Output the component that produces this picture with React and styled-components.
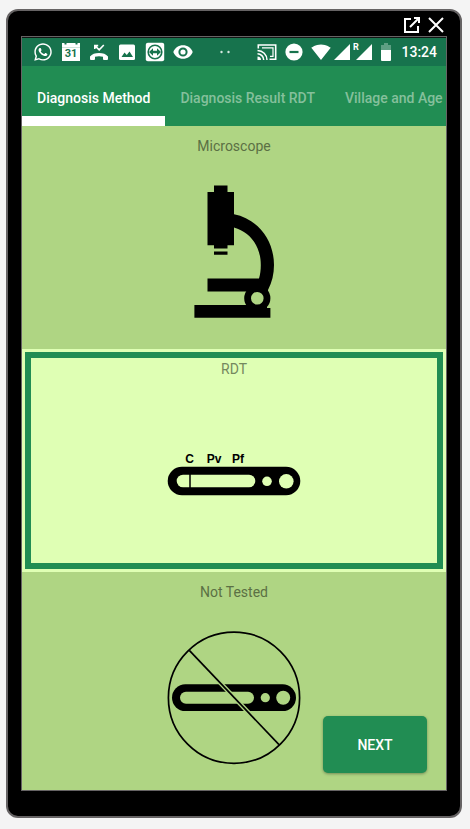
import React, { useState } from 'react';
import styled, { createGlobalStyle } from 'styled-components';
import { FaWhatsapp } from 'react-icons/fa';
import { MdSignalWifi4Bar } from 'react-icons/md';

const GlobalStyle = createGlobalStyle`
  *, *::before, *::after { box-sizing: border-box; }
  body {
    margin: 0;
    background: #f4f4f4;
    font-family: Roboto, "Liberation Sans", sans-serif;
  }
  button { font: inherit; border: 0; margin: 0; padding: 0; cursor: pointer; }
  svg { display: block; flex: none; }
`;

const Device = styled.div`
  margin: 9px 8px 11px 6px;
  padding: 0 13px 25px;
  background: #000;
  border: 2px solid #666364;
  border-radius: 12px;
`;

const WindowBar = styled.header`
  display: flex;
  justify-content: flex-end;
  align-items: center;
  gap: 8px;
  height: 25px;
  padding: 3px 3px 0 0;
`;

const WindowButton = styled.button`
  background: none;
  color: #fff;
`;

const Screen = styled.main`
  position: relative;
  overflow: hidden;
  border: 1px solid #666364;
`;

const StatusBar = styled.div`
  display: flex;
  justify-content: space-between;
  align-items: center;
  height: 29px;
  padding: 0 9px 0 11px;
  border-top: 1px solid #101513;
  background: #17734d;
  color: #fff;
`;

const IconGroup = styled.div`
  display: flex;
  align-items: center;
  gap: ${(p) => p.$gap}px;
`;

const Clock = styled.time`
  margin-left: 2px;
  font-size: 14px;
  line-height: 20px;
  font-weight: 500;
`;

const Tabs = styled.nav`
  display: flex;
  height: 60px;
  overflow: hidden;
  background: #218d53;
`;

const Tab = styled.button`
  flex: none;
  padding: 14px 15px 0;
  background: none;
  border-bottom: 10px solid ${(p) => (p.$active ? '#fff' : 'transparent')};
  color: ${(p) => (p.$active ? '#fff' : '#85c09c')};
  font-size: 14px;
  line-height: 20px;
  font-weight: 500;
  white-space: nowrap;
`;

const Options = styled.div`
  display: flex;
  flex-direction: column;
  height: 664px;
  overflow: hidden;
`;

const Option = styled.button`
  flex: none;
  display: flex;
  flex-direction: column;
  align-items: center;
  height: 223px;
  padding: 3px;
  background: ${(p) => (p.$selected ? '#dfffb4' : '#afd583')};
`;

const OptionBody = styled.span`
  flex: 1;
  align-self: stretch;
  display: flex;
  flex-direction: column;
  align-items: center;
  gap: 29px;
  padding-top: 1px;
  border: 6px solid ${(p) => (p.$selected ? '#218d53' : 'transparent')};
`;

const OptionLabel = styled.span`
  color: ${(p) => (p.$selected ? '#74885e' : '#5b7044')};
  font-size: 14px;
  line-height: 20px;
`;

const NextButton = styled.button`
  position: absolute;
  right: 19px;
  bottom: 17px;
  width: 104px;
  height: 57px;
  border-radius: 5px;
  background: #218d53;
  box-shadow: 0 1px 3px rgba(0, 0, 0, 0.35);
  color: #fff;
  font-size: 14px;
  font-weight: 500;
`;

const PopOutIcon = () => (
  <svg width="16" height="16" viewBox="0 0 16 16" fill="none" stroke="currentColor" strokeWidth="2">
    <path d="M7 2H1v13h13V9" />
    <path d="M6 10l9-9M10 1h5v5" />
  </svg>
);

const CloseIcon = () => (
  <svg width="16" height="16" viewBox="0 0 16 16" fill="none" stroke="currentColor" strokeWidth="2">
    <path d="M1 1l14 14M15 1L1 15" />
  </svg>
);

const CalendarIcon = () => (
  <svg width="20" height="20" viewBox="0 0 20 20">
    <path fill="#fff" d="M1 1h2.500v1.500h2V1h9v1.500h2V1H19v18H1z" />
    <path stroke="#17734d" d="M1 5.500h18" strokeOpacity="0.2" />
    <text x="10" y="15" textAnchor="middle" fontFamily="Roboto, sans-serif" fontSize="11" fontWeight="700" fill="#17734d">31</text>
  </svg>
);

const MissedCallIcon = () => (
  <svg width="20" height="20" viewBox="0 0 20 20">
    <path fill="none" stroke="#fff" strokeWidth="1.600" d="M5.800 7V3.600h3.400M6 3.800l4.200 4L14.800 3" />
    <path fill="#fff" d="M1 17v-2.500C3 12 6 11 10 11s7 1 9 3.500V17q0 1-1 1h-3q-1 0-1-1v-2.300c-2.500-.7-5.500-.7-8 0V17q0 1-1 1H2q-1 0-1-1z" />
  </svg>
);

const PictureIcon = () => (
  <svg width="20" height="20" viewBox="0 0 20 20">
    <rect x="2" y="2.500" width="16" height="15.500" rx="1.500" fill="#fff" />
    <path fill="#17734d" d="M4.500 15l3-4.500 2.300 2.600 2.700-3.600L16 15z" />
  </svg>
);

const RemoteIcon = () => (
  <svg width="20" height="20" viewBox="0 0 20 20">
    <rect x=".8" y=".8" width="18.400" height="18.400" rx="2" fill="#fff" />
    <circle cx="10" cy="10" r="6.800" fill="none" stroke="#17734d" strokeWidth="1.600" />
    <path fill="#17734d" d="M4 10l4-3.700v2.500h4V6.300l4 3.700-4 3.700v-2.500H8v2.500z" />
  </svg>
);

const EyeIcon = () => (
  <svg width="20" height="20" viewBox="0 0 20 20">
    <path fill="#fff" d="M10 3.200c4.500 0 8.100 2.700 9.700 6.800-1.600 4.100-5.200 6.800-9.700 6.800S1.900 14.100.3 10C1.900 5.900 5.500 3.200 10 3.200z" />
    <circle cx="10" cy="10" r="3.600" fill="#fff" stroke="#17734d" strokeWidth="2" />
  </svg>
);

const DotsIcon = () => (
  <svg width="10" height="20" viewBox="0 0 10 20" fill="#d5e8df">
    <circle cx="1.500" cy="10" r="1.200" />
    <circle cx="8.500" cy="10" r="1.200" />
  </svg>
);

const CastIcon = () => (
  <svg width="20" height="20" viewBox="0 0 20 20" fill="none" stroke="#fff">
    <path strokeWidth="1.600" d="M1.300 6.500V3h17.400v14.200H12.500" />
    <path strokeWidth="1.200" d="M5 5.800h11v8.600h-3" />
    <path strokeWidth="1.500" d="M.5 8.500A9.500 9.500 0 0 1 10 18M.5 11.800A6.200 6.200 0 0 1 6.700 18" />
    <path fill="#fff" stroke="none" d="M.5 14.500A3.500 3.500 0 0 1 4 18H.5z" />
  </svg>
);

const DoNotDisturbIcon = () => (
  <svg width="18" height="20" viewBox="0 0 18 20">
    <circle cx="9" cy="10" r="8.600" fill="#fff" />
    <path stroke="#17734d" strokeWidth="2.200" d="M4.500 10h9" />
  </svg>
);

const SignalIcon = () => (
  <svg width="16" height="20" viewBox="0 0 16 20" fill="#fff">
    <path d="M16 2v16H0z" />
  </svg>
);

const RoamingIcon = () => (
  <svg width="20" height="20" viewBox="0 0 20 20">
    <path fill="#fff" d="M19 2v16H3z" />
    <path fill="#17734d" d="M0 0h7.500v10H0z" />
    <text x="0" y="8" fontFamily="Roboto, sans-serif" fontSize="9" fontWeight="700" fill="#fff">R</text>
  </svg>
);

const BatteryIcon = () => (
  <svg width="10" height="20" viewBox="0 0 10 20">
    <path fill="#5d9f83" d="M3 1h4v2h3v6H0V3h3z" />
    <path fill="#fff" d="M0 8h10v10a1 1 0 0 1-1 1H1a1 1 0 0 1-1-1z" />
  </svg>
);

const MicroscopeDrawing = () => (
  <svg width="134" height="134" viewBox="0 0 134 134">
    <path d="M47 .5h13.500V7H67v22.300C91 34 107 55 107 80c0 9-2 17-6 25v4H88l-8-2.500H40.500v-13H92c1.200-4 1.800-8 1.800-13.500 0-19-10.800-33-26.800-37.500v17.800h-6.500v3.200H47v-3.200h-6.500V7H47z" />
    <path d="M47 66.600h13.500v3.200H47zM27.400 120H100v3h3.400v9.700h-76z" />
    <circle cx="90.300" cy="113.300" r="9.700" fill="#afd583" stroke="#000" strokeWidth="6.800" />
  </svg>
);

const RdtDrawing = () => (
  <svg width="134" height="134" viewBox="0 0 134 134">
    <g fontFamily="'Liberation Sans', Arial, sans-serif" fontSize="12" fontWeight="700" textAnchor="middle">
      <text x="22.500" y="55">C</text>
      <text x="47" y="55">Pv</text>
      <text x="71" y="55">Pf</text>
    </g>
    <rect x=".7" y="58.700" width="132.600" height="28.600" rx="14.300" />
    <g fill="#dfffb4">
      <rect x="9.700" y="66.700" width="78.600" height="12.600" rx="6.300" />
      <circle cx="100" cy="73.300" r="4.800" />
      <circle cx="119.300" cy="73.300" r="7.300" />
    </g>
    <path d="M23 66v14" stroke="#000" strokeWidth="1.500" />
  </svg>
);

const NotTestedDrawing = () => (
  <svg width="134" height="134" viewBox="0 0 134 134">
    <rect x="5" y="53.300" width="124" height="26.800" rx="13.400" />
    <g fill="#afd583">
      <rect x="13" y="60.700" width="74" height="12" rx="6" />
      <circle cx="98.300" cy="66.700" r="4.600" />
      <circle cx="116.200" cy="66.700" r="7" />
    </g>
    <path d="M22.300 19.300L112 113.700" stroke="#afd583" strokeWidth="4.400" />
    <path d="M22.300 19.300L112 113.700" stroke="#000" strokeWidth="1.700" />
    <circle cx="67" cy="66.700" r="65.600" fill="none" stroke="#000" strokeWidth="1.700" />
  </svg>
);

const tabs = ['Diagnosis Method', 'Diagnosis Result RDT', 'Village and Age'];

const options = [
  { label: 'Microscope', Drawing: MicroscopeDrawing },
  { label: 'RDT', Drawing: RdtDrawing },
  { label: 'Not Tested', Drawing: NotTestedDrawing },
];

export default function App() {
  const [tab, setTab] = useState(tabs[0]);
  const [choice, setChoice] = useState('RDT');

  return (
    <>
      <GlobalStyle />
      <Device>
        <WindowBar>
          <WindowButton type="button" aria-label="Open in new window"><PopOutIcon /></WindowButton>
          <WindowButton type="button" aria-label="Close"><CloseIcon /></WindowButton>
        </WindowBar>
        <Screen>
          <StatusBar>
            <IconGroup $gap={8}>
              <FaWhatsapp size={20} />
              <CalendarIcon />
              <MissedCallIcon />
              <PictureIcon />
              <RemoteIcon />
              <EyeIcon />
            </IconGroup>
            <DotsIcon />
            <IconGroup $gap={8}>
              <CastIcon />
              <DoNotDisturbIcon />
              <IconGroup $gap={3}>
                <MdSignalWifi4Bar size={20} />
                <SignalIcon />
                <RoamingIcon />
              </IconGroup>
              <BatteryIcon />
              <Clock>13:24</Clock>
            </IconGroup>
          </StatusBar>
          <Tabs>
            {tabs.map((name) => (
              <Tab key={name} type="button" $active={name === tab} onClick={() => setTab(name)}>
                {name}
              </Tab>
            ))}
          </Tabs>
          <Options>
            {options.map(({ label, Drawing }) => {
              const selected = label === choice;
              return (
                <Option
                  key={label}
                  type="button"
                  aria-pressed={selected}
                  $selected={selected}
                  onClick={() => setChoice(label)}
                >
                  <OptionBody $selected={selected}>
                    <OptionLabel $selected={selected}>{label}</OptionLabel>
                    <Drawing />
                  </OptionBody>
                </Option>
              );
            })}
          </Options>
          <NextButton type="button">NEXT</NextButton>
        </Screen>
      </Device>
    </>
  );
}
